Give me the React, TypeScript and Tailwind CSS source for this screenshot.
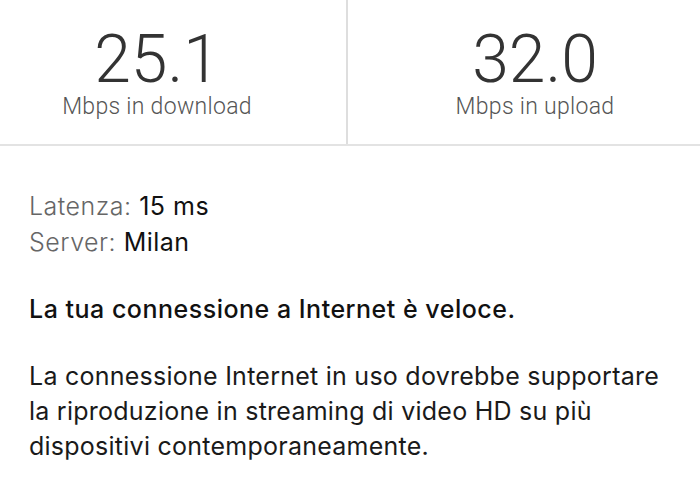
export default function App() {
    return (
        <div className="w-[700px] h-[500px] bg-white overflow-hidden font-['Inter',sans-serif]">

            {/* Speed results */}
            <div className="flex h-[146px] border-b-2 border-[#e3e3e3]">
                <div className="w-[348px] border-r-2 border-[#dedede] flex flex-col items-center pt-[27px] pr-[32px]">
                    <div className="font-['Roboto',sans-serif] font-light text-[66px] leading-none text-[#333]">25.1</div>
                    <div className="mt-[2px] font-['Roboto',sans-serif] font-light text-[23px] tracking-[0.3px] leading-none text-[#555]">Mbps in download</div>
                </div>
                <div className="flex-1 flex flex-col items-center pt-[27px] pl-[22px]">
                    <div className="font-['Roboto',sans-serif] font-light text-[66px] leading-none text-[#333]">32.0</div>
                    <div className="mt-[2px] font-['Roboto',sans-serif] font-light text-[23px] tracking-[0.3px] leading-none text-[#555]">Mbps in upload</div>
                </div>
            </div>

            {/* Details */}
            <div className="px-[29px] pt-[42px]">
                <div className="text-[25px] leading-[36px] tracking-[0.5px] text-[#111]">
                    <div>
                        <span className="font-light text-[#666]">Latenza: </span>
                        15 ms
                    </div>
                    <div>
                        <span className="font-light text-[#666]">Server: </span>
                        Milan
                    </div>
                </div>

                <p className="mt-[32px] font-medium text-[25px] leading-[35px] tracking-[0.5px] text-[#111]">
                    La tua connessione a Internet è veloce.
                </p>

                <p className="mt-[32px] text-[25px] leading-[35px] tracking-[0.25px] text-[#1a1a1a]">
                    La connessione Internet in uso dovrebbe supportare<br />
                    la riproduzione in streaming di video HD su più<br />
                    dispositivi contemporaneamente.
                </p>
            </div>
        </div>
    );
}
